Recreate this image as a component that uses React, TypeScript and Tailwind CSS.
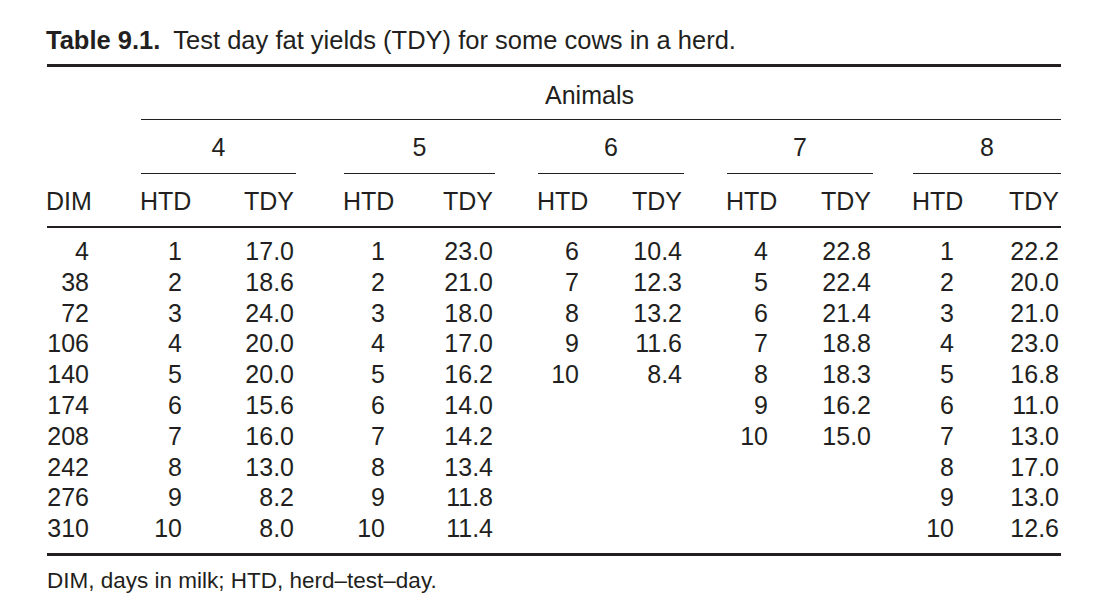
import type { ReactNode } from "react";

type Pair = [string, string];

const dim = ["4", "38", "72", "106", "140", "174", "208", "242", "276", "310"];

const seq = (from: number, vals: string[]): Pair[] =>
  vals.map((v, i) => [String(from + i), v]);

// one column per animal; shorter lists leave blank rows below
const animals: { id: string; rows: Pair[] }[] = [
  { id: "4", rows: seq(1, ["17.0", "18.6", "24.0", "20.0", "20.0", "15.6", "16.0", "13.0", "8.2", "8.0"]) },
  { id: "5", rows: seq(1, ["23.0", "21.0", "18.0", "17.0", "16.2", "14.0", "14.2", "13.4", "11.8", "11.4"]) },
  { id: "6", rows: seq(6, ["10.4", "12.3", "13.2", "11.6", "8.4"]) },
  { id: "7", rows: seq(4, ["22.8", "22.4", "21.4", "18.8", "18.3", "16.2", "15.0"]) },
  { id: "8", rows: seq(1, ["22.2", "20.0", "21.0", "23.0", "16.8", "11.0", "13.0", "17.0", "13.0", "12.6"]) },
];

const GRID = "grid grid-cols-[94px_155px_48px_151px_43px_146px_43px_146px_40px_148px]";

function Row({ first, cells, className = "" }: { first: ReactNode; cells: ReactNode[]; className?: string }) {
  const out: ReactNode[] = [<div key="first">{first}</div>];
  cells.forEach((c, i) => {
    if (i > 0) out.push(<div key={`gap-${i}`} />);
    out.push(<div key={`cell-${i}`}>{c}</div>);
  });
  return <div className={`${GRID} ${className}`}>{out}</div>;
}

export default function App() {
  return (
    <div className="h-[605px] w-[1097px] bg-white pl-[47px] pt-[26px] text-[#231f20] font-['Liberation_Sans',Arial,sans-serif]">
      <div className="w-[1014px]">
        {/* caption */}
        <p className="-ml-px whitespace-nowrap text-[25.5px] leading-[28px]">
          <span className="font-bold">Table 9.1.</span>
          <span className="ml-[13px]">Test day fat yields (TDY) for some cows in a herd.</span>
        </p>

        <div className="mt-[10px] h-[2.5px] bg-[#231f20]" />

        {/* spanner */}
        <div className="ml-[94px] border-b border-[#231f20] pb-[10px] pr-[23px] pt-[14px] text-center text-[25px] leading-[28px]">
          Animals
        </div>

        <Row
          className="text-[25px] leading-[28px]"
          first={null}
          cells={animals.map((a) => (
            <div className="border-b border-[#231f20] pb-[12px] pt-[13.5px] text-center">{a.id}</div>
          ))}
        />

        <Row
          className="pb-[11px] pt-[13px] text-[25px] leading-[28px]"
          first={<span className="-ml-[1px]">DIM</span>}
          cells={animals.map(() => (
            <div className="grid grid-cols-[41px_1fr]">
              <span className="-ml-[1px] whitespace-nowrap">HTD</span>
              <span className="pr-[2px] text-right">TDY</span>
            </div>
          ))}
        />

        <div className="h-[1.5px] bg-[#231f20]" />

        {/* body */}
        <div className="pb-[9.5px] pt-[8.5px] text-[25px] leading-[30.8px]">
          {dim.map((d, r) => (
            <Row
              key={d}
              first={<div className="w-[42px] text-right">{d}</div>}
              cells={animals.map((a) => {
                const cell = a.rows[r];
                return (
                  <div className="grid h-[30.8px] grid-cols-[41px_1fr]">
                    <span className="text-right">{cell ? cell[0] : ""}</span>
                    <span className="pr-[2px] text-right">{cell ? cell[1] : ""}</span>
                  </div>
                );
              })}
            />
          ))}
        </div>

        <div className="h-[2.5px] bg-[#231f20]" />

        <p className="mt-[12.5px] whitespace-nowrap text-[22.5px] leading-[26px]">
          DIM, days in milk; HTD, herd–test–day.
        </p>
      </div>
    </div>
  );
}
